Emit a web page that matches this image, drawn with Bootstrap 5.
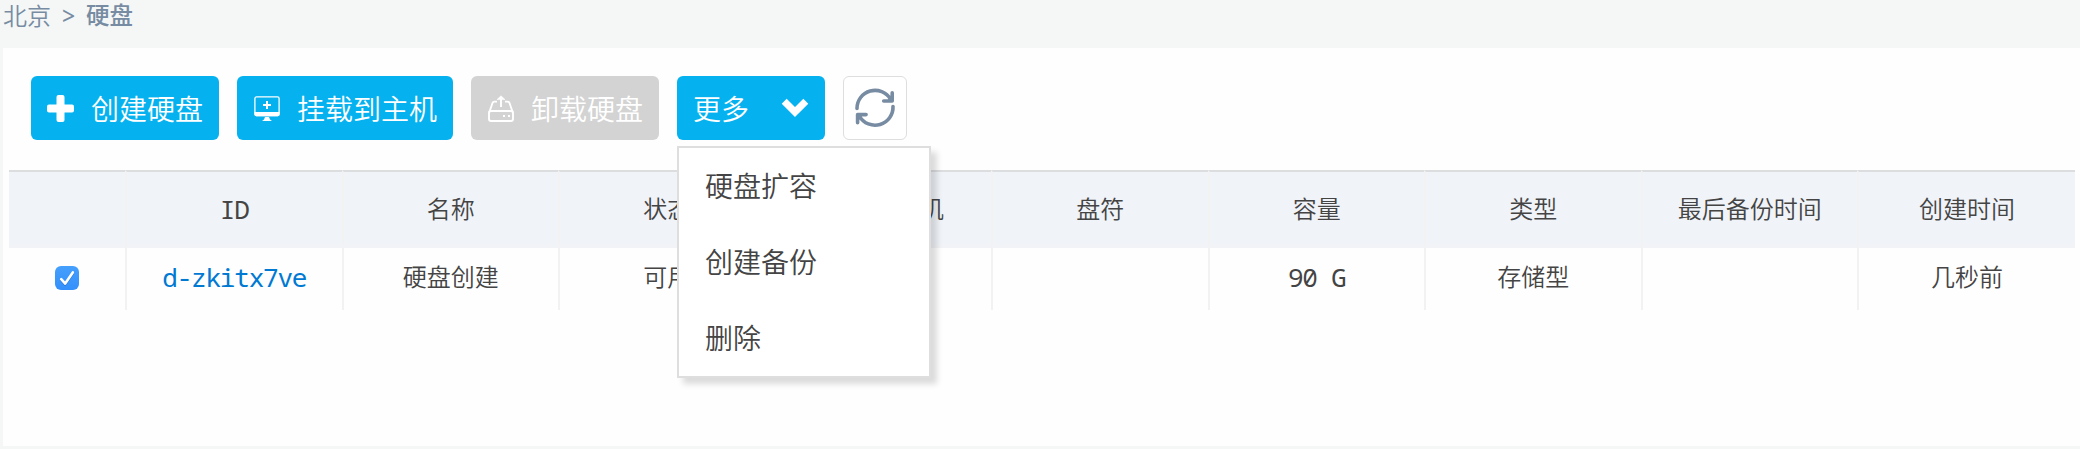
<!DOCTYPE html>
<html lang="zh-CN">
<head>
<meta charset="utf-8">
<meta name="viewport" content="width=device-width, initial-scale=1">
<title>硬盘</title>
<link href="https://cdn.jsdelivr.net/npm/bootstrap@5.3.0/dist/css/bootstrap.min.css" rel="stylesheet">
<style>
body{background:#f5f7f7;color:#444;font-family:"Noto Sans Mono","Liberation Mono","Noto Sans CJK SC",monospace;font-size:24px;font-weight:350;height:449px;overflow:hidden}
.crumbs{height:48px;padding-left:3px;line-height:31px;color:#778ca2}
.crumbs .sep{font-weight:400;width:35px;text-align:center;font-size:26px}
.crumbs .here{font-weight:500;font-size:23.5px}
.panel{margin-left:3px;height:398px;background:#fefefe;padding:28px 5px 0 6px}
.tools{gap:18px;padding-left:22px;height:94px}
.tools .btn{height:64px;border:0;border-radius:6px;padding:0 16px;font-size:28px;font-weight:350;line-height:1;color:#fff;background:#05b2ef;gap:17px}
.tools .btn svg{display:block;flex:none}
.tools .btn span{padding-top:2px;white-space:nowrap}
.tools .btn-off{background:#d3d3d3;opacity:1}
.tools .btn-reload{width:64px;padding:0;background:#fff;border:1px solid #dedede}
.tools .btn-more{width:148px}
.more-menu{left:0;top:70px;width:254px;border:2px solid #dedede;border-radius:0;padding:0;background:#fff;box-shadow:6px 6px 6px rgba(0,0,0,.14)}
.more-menu .dropdown-item{height:76px;line-height:76px;padding:0 26px;font-size:28px;font-weight:350;color:#444}
.disks{table-layout:fixed;width:2066px;border-collapse:separate;border-spacing:0;text-align:center}
.disks th{height:78px;padding:2px 0 0;background:#f0f3f8;font-weight:350;vertical-align:middle;border-top:2px solid #dcdddf;border-bottom:4px solid #f2f3f6}
.disks td{height:62px;padding:0 0 5px;vertical-align:middle;line-height:36px}
.disks td:first-child{padding-bottom:3px}
.disks .col-check{width:116px}
.disks .col-last{width:218px}
.disks th+th,.disks td+td{border-left:2px solid #f2f2f3}
.disks a{color:#0079d3;text-decoration:none}
.disks .latin{font-weight:400;font-size:26px;letter-spacing:-1.2px;line-height:36px}
.tick{width:24px;height:24px;border-radius:6px;background:linear-gradient(#459ffc,#338ffb)}
</style>
</head>
<body>
<nav class="crumbs d-flex"><span>北京</span><span class="sep">&gt;</span><span class="here">硬盘</span></nav>
<main class="panel">
  <div class="tools d-flex align-items-start">
    <button class="btn d-flex align-items-center" type="button">
      <svg width="27" height="27" viewBox="0 0 27 27" fill="#fff"><rect x="9.5" width="8" height="27" rx="2"/><rect y="9.5" width="27" height="8" rx="2"/></svg>
      <span>创建硬盘</span>
    </button>
    <button class="btn d-flex align-items-center" type="button">
      <svg width="27" height="27" viewBox="0 0 27 27"><rect x="1.9" y="1.9" width="24.2" height="18.6" rx="1.6" fill="none" stroke="#fff" stroke-width="1.3"/><path d="M1.5 17h25v2.5q0 1.7-1.7 1.7H3.2q-1.7 0-1.7-1.7zM12 22h4l1 2.5 2 1.5h-10l2-1.5zM13 6h2v3h3v2h-3v3h-2v-3h-3V9h3z" fill="#fff"/></svg>
      <span>挂载到主机</span>
    </button>
    <button class="btn btn-off d-flex align-items-center" type="button">
      <svg width="27" height="27" viewBox="0 0 27 27" fill="none" stroke="#fff" stroke-width="1.9" stroke-linejoin="round"><rect x="2" y="16" width="24" height="10" rx="2"/><path d="M2.200 17.500L5.500 8q.5-1.400 2-1.400H10M18 6.600h2.500q1.500 0 2 1.400l3.300 9.500M14 12V4"/><path d="M14 .8L18 4.600h-8z" fill="#fff" stroke-width=".6"/><path d="M16 21h2M21 21h2" stroke-width="2"/></svg>
      <span>卸载硬盘</span>
    </button>
    <div class="position-relative">
      <button class="btn btn-more d-flex align-items-center justify-content-between" type="button">
        <span>更多</span>
        <svg width="28" height="22" viewBox="0 0 28 22"><path d="M3.200 4.200L14 15l10.800-10.800" fill="none" stroke="#fff" stroke-width="7"/></svg>
      </button>
      <div class="dropdown-menu more-menu show">
        <a class="dropdown-item" href="#">硬盘扩容</a>
        <a class="dropdown-item" href="#">创建备份</a>
        <a class="dropdown-item" href="#">删除</a>
      </div>
    </div>
    <button class="btn btn-reload d-flex align-items-center justify-content-center" type="button" aria-label="刷新">
      <svg width="42" height="42" viewBox="0 0 42 42" fill="none" stroke="#778ca2" stroke-width="3.600" stroke-linecap="round" stroke-linejoin="round"><path d="M3 21.500A18 18 0 0 1 36.500 12.200M38.200 5.800v8.200h-8.500M39 19.500A18 18 0 0 1 5.500 29.300M3.600 35.800v-8.200h8.500"/><path d="M38 9.500V14h-4zM3.800 32v-4.200h4z" stroke-width="1" fill="#778ca2"/></svg>
    </button>
  </div>
  <table class="disks">
    <colgroup><col class="col-check"><col span="8"><col class="col-last"></colgroup>
    <thead>
      <tr><th></th><th class="latin">ID</th><th>名称</th><th>状态</th><th>已挂载主机</th><th>盘符</th><th>容量</th><th>类型</th><th>最后备份时间</th><th>创建时间</th></tr>
    </thead>
    <tbody>
      <tr>
        <td><svg class="tick d-block mx-auto" viewBox="0 0 24 24" fill="none" stroke-linecap="round" stroke-linejoin="round"><path d="M6.200 14.200l4 4.400L17.800 7.600" stroke="#2b78d4" stroke-width="2.600"/><path d="M6.200 13.200l4 4.400L17.800 6.400" stroke="#fff" stroke-width="2.600"/></svg></td>
        <td class="latin"><a href="#">d-zkitx7ve</a></td><td>硬盘创建</td><td>可用</td><td></td><td></td><td class="latin">90 G</td><td>存储型</td><td></td><td>几秒前</td>
      </tr>
    </tbody>
  </table>
</main>
<script src="https://cdn.jsdelivr.net/npm/bootstrap@5.3.0/dist/js/bootstrap.bundle.min.js"></script>
</body>
</html>
